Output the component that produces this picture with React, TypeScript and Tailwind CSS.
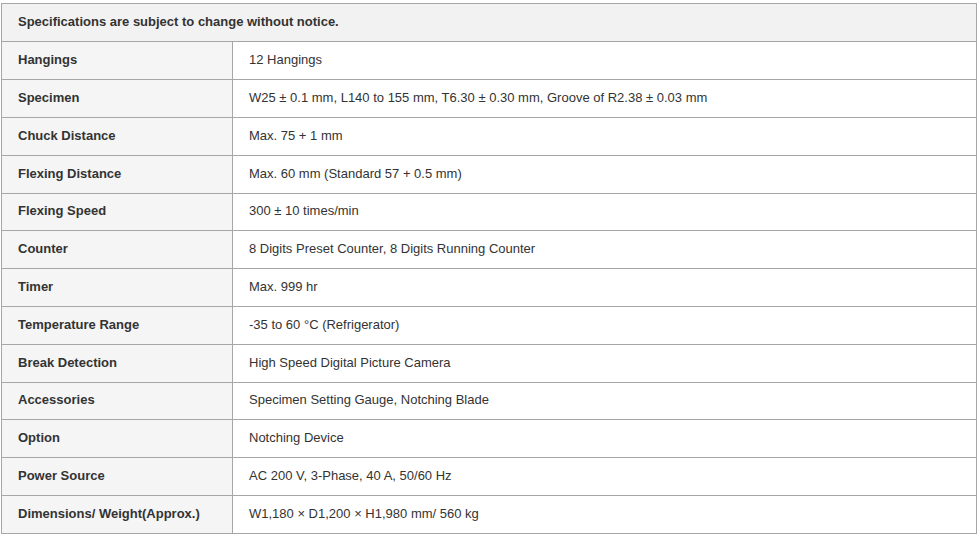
import React from "react";

const rows: [string, string][] = [
  ["Hangings", "12 Hangings"],
  ["Specimen", "W25 ± 0.1 mm, L140 to 155 mm, T6.30 ± 0.30 mm, Groove of R2.38 ± 0.03 mm"],
  ["Chuck Distance", "Max. 75 + 1 mm"],
  ["Flexing Distance", "Max. 60 mm (Standard 57 + 0.5 mm)"],
  ["Flexing Speed", "300 ± 10 times/min"],
  ["Counter", "8 Digits Preset Counter, 8 Digits Running Counter"],
  ["Timer", "Max. 999 hr"],
  ["Temperature Range", "-35 to 60 °C (Refrigerator)"],
  ["Break Detection", "High Speed Digital Picture Camera"],
  ["Accessories", "Specimen Setting Gauge, Notching Blade"],
  ["Option", "Notching Device"],
  ["Power Source", "AC 200 V, 3-Phase, 40 A, 50/60 Hz"],
  ["Dimensions/ Weight(Approx.)", "W1,180 × D1,200 × H1,980 mm/ 560 kg"],
];

const short = new Set(["Flexing Speed", "Accessories"]);

export default function App() {
  return (
    <div className="bg-white w-[980px] h-[536px] pt-[3px] pl-[1px] font-['Liberation_Sans',Arial,sans-serif] text-[13px] text-[#333]">
      <div className="w-[976px] border-l border-t border-[#a6a6a6]">
        {/* header */}
        <div className="h-[38px] flex items-center px-4 pb-[2px] bg-[#f2f2f2] border-r border-b border-[#a6a6a6] font-bold">
          Specifications are subject to change without notice.
        </div>
        {rows.map(([label, value]) => (
          <div
            key={label}
            className={`grid grid-cols-[231px_1fr] ${short.has(label) ? "h-[37px]" : "h-[38px]"}`}
          >
            <div className="flex items-center pl-4 pb-[2px] bg-[#f5f5f5] border-r border-b border-[#a6a6a6] font-bold">
              {label}
            </div>
            <div className="flex items-center pl-4 pb-[2px] bg-white border-r border-b border-[#a6a6a6]">
              {value}
            </div>
          </div>
        ))}
      </div>
    </div>
  );
}
